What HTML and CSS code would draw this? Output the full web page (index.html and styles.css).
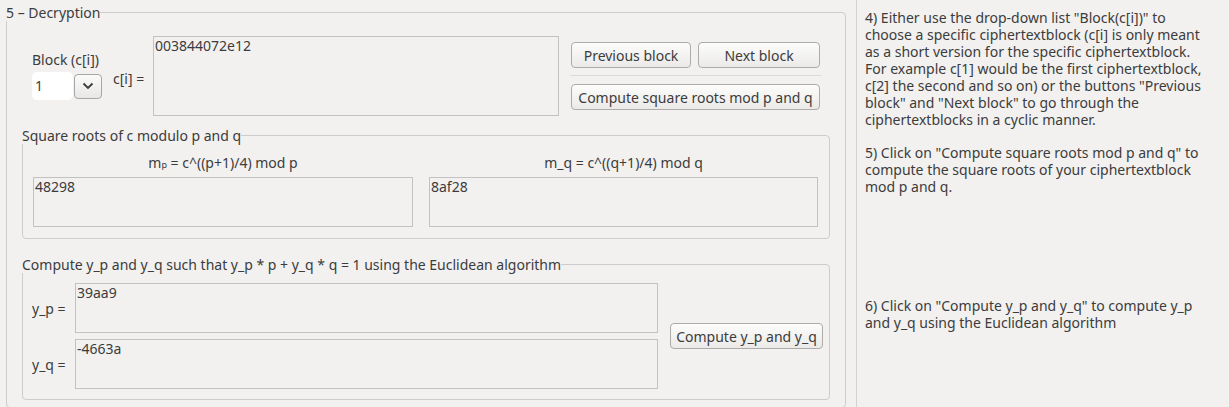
FILE: index.html
```html
<!DOCTYPE html>
<html>
<head>
<meta charset="utf-8">
<link rel="stylesheet" href="styles.css">
</head>
<body>
<div class="app">
  <div class="main">
    <fieldset class="group outer">
      <legend>5 – Decryption</legend>
      <div class="outer-body">
        <div class="block-row">
          <div class="block-col">
            <div class="lbl">Block (c[i])</div>
            <div class="combo">
              <div class="combo-field">1</div>
              <div class="combo-btn">
                <svg width="12" height="8" viewBox="0 0 12 8"><path d="M1.5 1.5 L6 6 L10.5 1.5" fill="none" stroke="#3c3c3c" stroke-width="1.8"/></svg>
              </div>
            </div>
          </div>
          <div class="ci-lbl">c[i] =</div>
          <textarea class="ta ta-ci" readonly>003844072e12</textarea>
          <div class="btn-col">
            <div class="btn-pair">
              <button class="btn btn-prev">Previous block</button>
              <button class="btn btn-next">Next block</button>
            </div>
            <div class="sep"></div>
            <button class="btn btn-sqrt">Compute square roots mod p and q</button>
          </div>
        </div>

        <fieldset class="group inner roots">
          <legend>Square roots of c modulo p and q</legend>
          <div class="roots-body">
            <div class="root-col left">
              <div class="formula">m<span class="sub">p</span> = c^((p+1)/4) mod p</div>
              <textarea class="ta ta-root" readonly>48298</textarea>
            </div>
            <div class="root-col right">
              <div class="formula">m_q = c^((q+1)/4) mod q</div>
              <textarea class="ta ta-root" readonly>8af28</textarea>
            </div>
          </div>
        </fieldset>

        <fieldset class="group inner euclid">
          <legend>Compute y_p and y_q such that y_p * p + y_q * q = 1 using the Euclidean algorithm</legend>
          <div class="euclid-body">
            <div class="y-rows">
              <div class="y-row">
                <div class="y-lbl">y_p =</div>
                <textarea class="ta ta-y" readonly>39aa9</textarea>
              </div>
              <div class="y-row">
                <div class="y-lbl">y_q =</div>
                <textarea class="ta ta-y" readonly>-4663a</textarea>
              </div>
            </div>
            <button class="btn btn-y">Compute y_p and y_q</button>
          </div>
        </fieldset>
      </div>
    </fieldset>
  </div>
  <div class="help">
    <p class="h4">4) Either use the drop-down list "Block(c[i])" to choose a specific ciphertextblock (c[i] is only meant as a short version for the specific ciphertextblock. For example c[1] would be the first ciphertextblock, c[2] the second and so on) or the buttons "Previous block" and "Next block" to go through the ciphertextblocks in a cyclic manner.</p>
    <p class="h5">5) Click on "Compute square roots mod p and q" to compute the square roots of your ciphertextblock mod p and q.</p>
    <p class="h6">6) Click on "Compute y_p and y_q" to compute y_p and y_q using the Euclidean algorithm</p>
  </div>
</div>
</body>
</html>
```

FILE: styles.css
```css
html, body {
  margin: 0;
  padding: 0;
  background: #f2f1f0;
  overflow: hidden;
}
body {
  width: 1229px;
  height: 407px;
  font-family: "Noto Sans", "Open Sans", sans-serif;
  font-size: 14px;
  line-height: 17px;
  color: #3c3c3c;
}
.app {
  display: flex;
  height: 407px;
}
.main {
  width: 856px;
  flex: none;
}
.help {
  flex: 1;
  border-left: 1px solid #d3d2d0;
  padding-left: 8px;
  padding-right: 19px;
}
.help p {
  margin: 0;
}
.h4 { padding-top: 9px; }
.help .h5 { margin-top: 16px; }
.help .h6 { margin-top: 102px; }

.group {
  border: 1px solid #cfcdcb;
  border-radius: 4px;
  padding: 0;
  margin: 0;
  min-width: 0;
}
.group > legend {
  padding: 0;
  margin-left: -1px;
  line-height: 17px;
}
.outer {
  margin: 4px 0 0 6px;
  width: 840px;
  box-sizing: border-box;
  height: 404px;
}
.outer-body {
  padding: 15px 15px 0 15px;
}

.block-row {
  display: flex;
  align-items: flex-start;
  margin-left: 10px;
}
.block-col {
  padding-top: 15px;
  width: 70px;
}
.lbl {
  height: 17px;
  white-space: nowrap;
}
.combo {
  display: flex;
  align-items: center;
  margin-top: 4px;
  height: 28px;
}
.combo-field {
  width: 41px;
  height: 28px;
  background: #ffffff;
  border-radius: 5px;
  box-sizing: border-box;
  padding-left: 3px;
  line-height: 28px;
}
.combo-btn {
  margin-left: 1px;
  width: 28px;
  height: 25px;
  box-sizing: border-box;
  border: 1px solid #a9a7a5;
  border-radius: 4px;
  background: linear-gradient(#fbfbfa, #e8e7e5);
  display: flex;
  align-items: center;
  justify-content: center;
}
.ci-lbl {
  margin-left: 11px;
  margin-top: 34px;
  width: 40px;
  white-space: nowrap;
}
.ta {
  display: block;
  box-sizing: border-box;
  border: 1px solid #c4c2c0;
  background: transparent;
  font: inherit;
  color: inherit;
  line-height: 17px;
  padding: 0 1px;
  resize: none;
  margin: 0;
  outline: none;
  overflow: hidden;
}
.ta-ci {
  width: 406px;
  height: 80px;
}
.btn-col {
  margin-left: 11px;
  padding-top: 6px;
  width: 251px;
}
.btn-pair {
  display: flex;
  padding-left: 1px;
}
.btn {
  font: inherit;
  color: inherit;
  height: 26px;
  box-sizing: border-box;
  border: 1px solid #aeacaa;
  border-radius: 4px;
  background: linear-gradient(#fcfcfb, #ebeae8);
  padding: 0 3px;
  margin: 0;
  white-space: nowrap;
}
.btn-prev { width: 120px; }
.btn-next { width: 122px; margin-left: 7px; }
.sep {
  height: 1px;
  background: #dddbd9;
  margin: 7px 0 8px 0;
}
.btn-sqrt {
  width: 249px;
  margin-left: 1px;
}

.inner {
  width: 808px;
  box-sizing: border-box;
}
.roots {
  margin-top: 11px;
}
.roots-body {
  display: flex;
  padding: 10px 10px 11px 10px;
}
.root-col.left { width: 380px; }
.root-col.right { width: 389px; margin-left: 16px; }
.formula {
  text-align: center;
  height: 17px;
  margin-bottom: 6px;
}
.sub {
  font-size: 9px;
}
.ta-root {
  width: 100%;
  height: 50px;
}

.euclid {
  margin-top: 17px;
}
.euclid-body {
  display: flex;
  align-items: center;
  padding: 10px 6px 10px 9px;
}
.y-rows {
  display: flex;
  flex-direction: column;
  gap: 6px;
}
.y-row {
  display: flex;
  align-items: center;
}
.y-lbl {
  width: 43px;
}
.ta-y {
  width: 583px;
  height: 50px;
}
.btn-y {
  margin-left: 12px;
  width: 153px;
}
```
